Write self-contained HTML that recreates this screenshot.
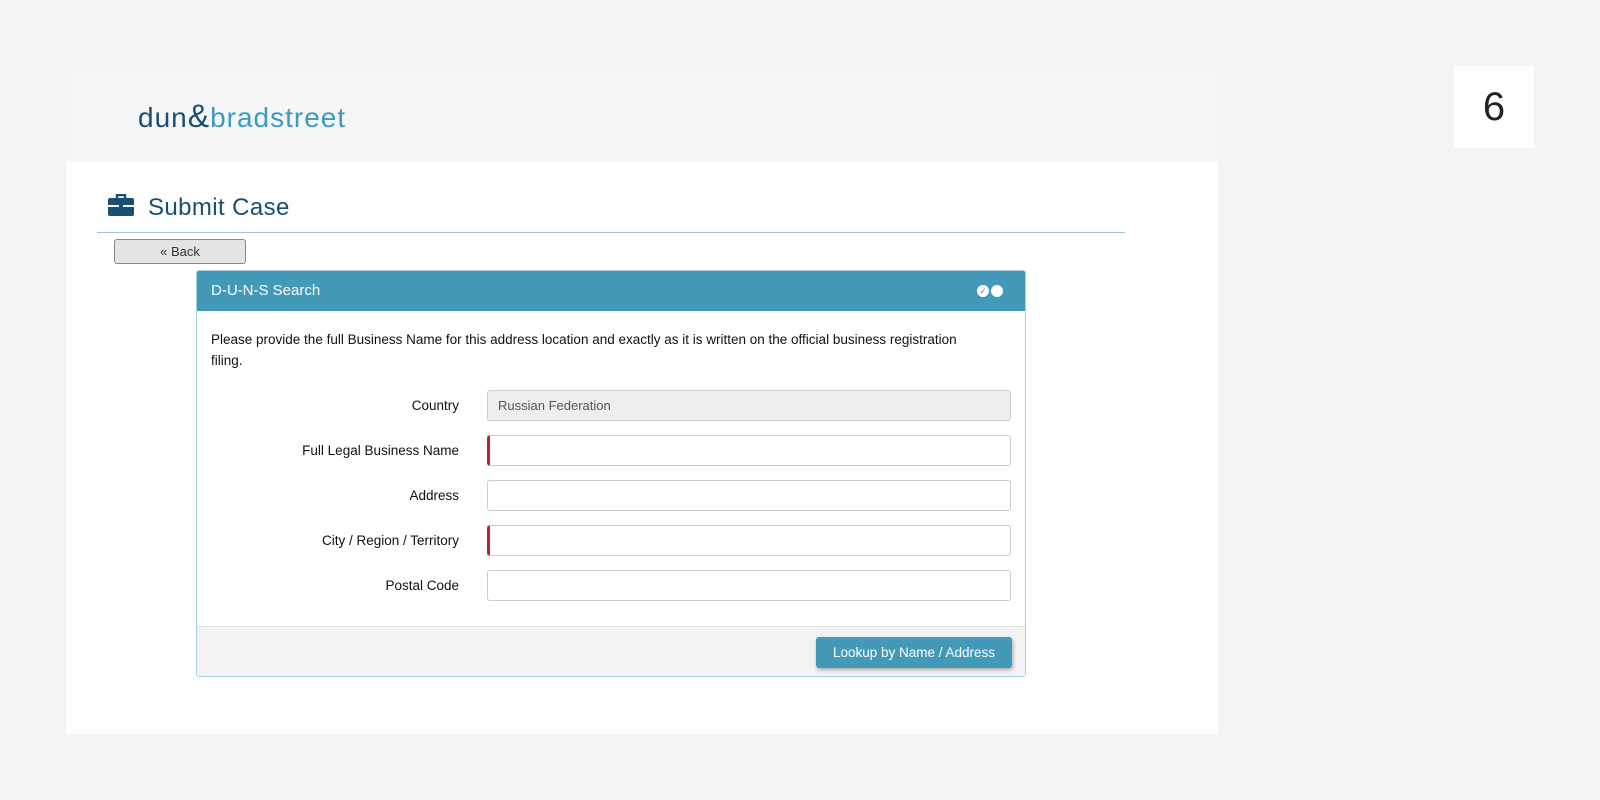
<!DOCTYPE html>
<html><head><style>
body{margin:0;width:1600px;height:800px;background:#f4f4f4;font-family:"Liberation Sans",sans-serif;position:relative;overflow:hidden}
.card{position:absolute;left:66px;top:66px;width:1152px;height:668px;background:#fff}
.hdr{position:absolute;left:0;top:0;width:1152px;height:96px;background:#f6f6f6}
.logo{position:absolute;left:72px;top:32px;font-size:28px;letter-spacing:1px}
.num{position:absolute;left:1454px;top:66px;width:80px;height:82px;background:#fff;font-size:40px;text-align:center;line-height:82px;color:#222}
.title{position:absolute;left:82px;top:128px;font-size:24px;color:#1b4f72;letter-spacing:0.4px}
.rule{position:absolute;left:31px;top:166px;width:1028px;height:1px;background:#9cc7d8}
.back{position:absolute;left:48px;top:173px;width:130px;height:23px;background:#e4e4e4;border:1px solid #888;border-radius:3px;font-size:13px;text-align:center;line-height:23px;color:#333}
.panel{position:absolute;left:130px;top:204px;width:828px;height:405px;border:1px solid #a9cfdd;border-radius:3px;overflow:hidden}
.ph{height:40px;background:#4399b8;color:#fff;font-size:15px;line-height:40px;padding-left:14px;position:relative}
.desc{position:absolute;left:14px;top:58px;font-size:13.5px;line-height:21px;color:#111;width:775px}
.lab{position:absolute;right:566px;font-size:13.5px;color:#111}
.in{position:absolute;left:290px;width:524px;height:31px;border:1px solid #ccc;border-radius:3px;box-sizing:border-box;background:#fff;font-size:13px;color:#555;line-height:29px;padding-left:10px}
.req{border-left:3px solid #b02a2a}
.foot{position:absolute;left:0;top:355px;width:828px;height:50px;background:#f3f3f3;border-top:1px solid #e4e4e4}
.btn{position:absolute;right:13px;top:10px;width:196px;height:31px;background:#4399b8;color:#fff;font-size:13.5px;line-height:31px;text-align:center;border-radius:3px;box-shadow:1px 2px 4px rgba(0,0,0,.3)}
</style></head><body>
<div class="card">
<div class="hdr"><div class="logo"><span style="color:#1b4f72">dun</span><span style="color:#1b4f72;font-size:32px">&amp;</span><span style="color:#3a9cc0">bradstreet</span></div></div>
<svg style="position:absolute;left:42px;top:128px" width="26" height="22" viewBox="0 0 26 22"><path d="M9 4V1h8v3" fill="none" stroke="#1b4f72" stroke-width="2.5"/><rect x="0" y="4" width="26" height="18" rx="2" fill="#1b4f72"/><rect x="0" y="11" width="26" height="2" fill="#fff"/><rect x="11" y="10" width="4" height="4" fill="#1b4f72"/></svg>
<div class="title">Submit Case</div>
<div class="rule"></div>
<div class="back">« Back</div>
<div class="panel">
<div class="ph">D-U-N-S Search
<span style="position:absolute;right:36px;top:14px;width:12px;height:12px;border-radius:50%;background:#fff;color:#4399b8;font-size:9px;line-height:12px;text-align:center">✓</span>
<span style="position:absolute;right:22px;top:14px;width:12px;height:12px;border-radius:50%;background:#fff"></span></div>
<div class="desc">Please provide the full Business Name for this address location and exactly as it is written on the official business registration filing.</div>
<div class="lab" style="top:127px">Country</div><div class="in" style="top:119px;background:#eee;border-color:#ccc">Russian Federation</div>
<div class="lab" style="top:172px">Full Legal Business Name</div><div class="in req" style="top:164px"></div>
<div class="lab" style="top:217px">Address</div><div class="in" style="top:209px"></div>
<div class="lab" style="top:262px">City / Region / Territory</div><div class="in req" style="top:254px"></div>
<div class="lab" style="top:307px">Postal Code</div><div class="in" style="top:299px"></div>
<div class="foot"><div class="btn">Lookup by Name / Address</div></div>
</div>
</div>
<div class="num">6</div>
</body></html>
